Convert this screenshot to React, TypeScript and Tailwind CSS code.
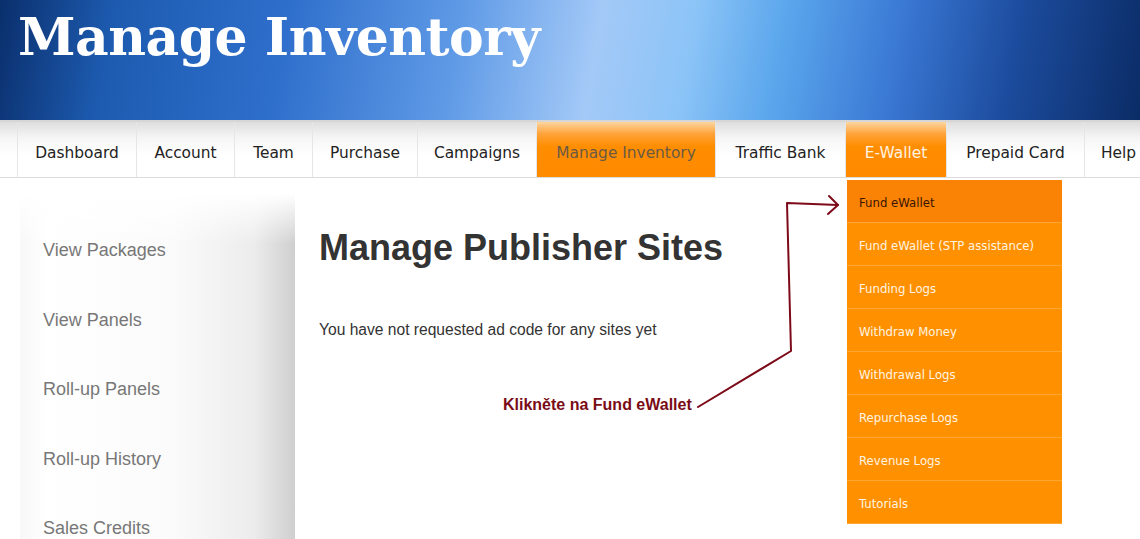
const navItems = [
  { label: "", w: "w-[18px]" },
  { label: "Dashboard", w: "w-[119px]" },
  { label: "Account", w: "w-[98px]" },
  { label: "Team", w: "w-[78px]" },
  { label: "Purchase", w: "w-[105px]" },
  { label: "Campaigns", w: "w-[119px]" },
  { label: "Manage Inventory", w: "w-[179px]", active: "dim" },
  { label: "Traffic Bank", w: "w-[130px]" },
  { label: "E-Wallet", w: "w-[101px]", active: "open" },
  { label: "Prepaid Card", w: "w-[138px]" },
  { label: "Help", w: "w-[68px]" },
];

const walletMenu = [
  "Fund eWallet",
  "Fund eWallet (STP assistance)",
  "Funding Logs",
  "Withdraw Money",
  "Withdrawal Logs",
  "Repurchase Logs",
  "Revenue Logs",
  "Tutorials",
];

const sideLinks = ["View Packages", "View Panels", "Roll-up Panels", "Roll-up History", "Sales Credits"];

function NavBar() {
  return (
    <nav className="h-[58px] flex border-t-2 border-t-[#d6d6d6] border-b border-b-[#dcdcdc] bg-white overflow-hidden font-['DejaVu_Sans',Verdana,sans-serif] text-[15.4px]">
      {navItems.map((item, idx) => (
        <div
          key={idx}
          className={`${item.w} shrink-0 flex items-center justify-center pt-[8px] border-r border-r-[#e6e6e6] ${
            item.active
              ? "bg-[linear-gradient(to_bottom,#fdd5a0_0%,#ffa238_22%,#ff8d00_45%,#ff8a00_100%)]"
              : "bg-[linear-gradient(to_bottom,#dedede_0%,#f6f6f6_30%,#ffffff_60%)]"
          } ${item.active === "dim" ? "text-[#6b5a44]" : item.active === "open" ? "text-[#fff3e0]" : "text-[#222]"}`}
        >
          {item.label}
        </div>
      ))}
    </nav>
  );
}

function WalletDropdown() {
  return (
    <div className="absolute left-[847px] top-[180px] w-[215px] font-['DejaVu_Sans',Verdana,sans-serif] text-[11.7px]">
      {walletMenu.map((label, idx) => (
        <div
          key={label}
          className={`h-[43px] flex items-center pl-[12px] pt-[5px] border-b border-b-[#ffa733] ${
            idx === 0 ? "bg-[#fa8205] text-[#3a1600]" : "bg-[#ff9000] text-[#fff4e2]"
          }`}
        >
          {label}
        </div>
      ))}
    </div>
  );
}

function Annotation() {
  return (
    <>
      <svg className="absolute left-0 top-0 pointer-events-none" width="1140" height="539">
        <g fill="none" stroke="#7d0a18" strokeWidth="2" strokeLinecap="round" strokeLinejoin="round">
          <path d="M698 407 L791 351 L787 203 L838 205" />
          <path d="M829 196 L838 205 L828 214" />
        </g>
      </svg>
      <div className="absolute left-[503px] top-[393px] font-['Liberation_Sans',Arial,sans-serif] font-bold text-[16px] text-[#7a0c16]">
        Klikněte na Fund eWallet
      </div>
    </>
  );
}

export default function App() {
  return (
    <div className="relative w-[1140px] h-[539px] overflow-hidden bg-white">
      <header className="h-[120px] bg-[linear-gradient(100deg,#0a2f6c_0%,#1d5bb0_10%,#2f6fcc_25%,#5f9ae6_40%,#a3c9f7_52%,#8cc4f7_60%,#5aa6ec_68%,#3a78d4_78%,#1c4c9e_88%,#0b2c66_100%)] px-[18px] pt-[4px]">
        <h1 className="text-white font-['DejaVu_Serif',Georgia,serif] font-bold text-[52px] leading-[66px] tracking-[-0.5px]">
          Manage Inventory
        </h1>
      </header>

      <NavBar />

      <div className="flex pt-[16px]">
        <aside className="ml-[20px] w-[275px] h-[400px] pt-[45px] pl-[23px] flex flex-col gap-[47.6px] bg-[linear-gradient(to_bottom,#ffffff_0px,rgba(255,255,255,0)_50px),linear-gradient(to_right,#f8f8f8_0%,#ffffff_10%,#fbfbfb_55%,#ececec_85%,#cfcfcf_100%)] font-['Liberation_Sans',Arial,sans-serif] text-[18px] text-[#777]">
          {sideLinks.map((link) => (
            <div key={link} className="h-[22px] leading-[22px]">
              {link}
            </div>
          ))}
        </aside>

        <main className="pl-[24px] pt-[34px] font-['Liberation_Sans',Arial,sans-serif] text-[#333]">
          <h2 className="text-[36px] font-bold leading-[40px]">Manage Publisher Sites</h2>
          <p className="mt-[50px] text-[15.6px]">You have not requested ad code for any sites yet</p>
        </main>
      </div>

      <WalletDropdown />
      <Annotation />
    </div>
  );
}
